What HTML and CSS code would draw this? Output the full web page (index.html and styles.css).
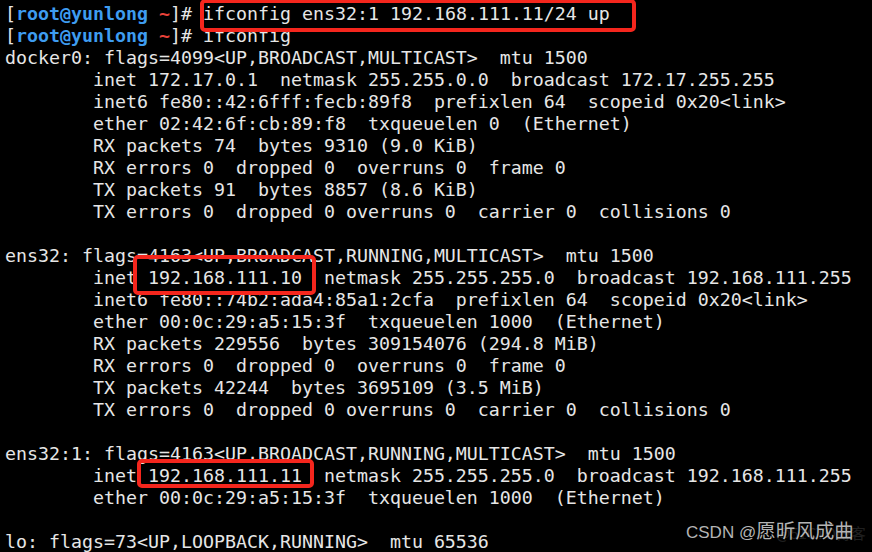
FILE: index.html
```html
<!DOCTYPE html>
<html lang="zh-CN">
<head>
    <meta charset="UTF-8">
    <title>ifconfig</title>
    <link rel="stylesheet" href="styles.css">
</head>
<body>
    <main class="terminal">
<pre class="output"><span class="br">[</span><span class="user">root@yunlong</span> <span class="tilde">~</span><span class="br">]#</span> ifconfig ens32:1 192.168.111.11/24 up
<span class="br">[</span><span class="user">root@yunlong</span> <span class="tilde">~</span><span class="br">]#</span> ifconfig
docker0: flags=4099&lt;UP,BROADCAST,MULTICAST&gt;  mtu 1500
        inet 172.17.0.1  netmask 255.255.0.0  broadcast 172.17.255.255
        inet6 fe80::42:6fff:fecb:89f8  prefixlen 64  scopeid 0x20&lt;link&gt;
        ether 02:42:6f:cb:89:f8  txqueuelen 0  (Ethernet)
        RX packets 74  bytes 9310 (9.0 KiB)
        RX errors 0  dropped 0  overruns 0  frame 0
        TX packets 91  bytes 8857 (8.6 KiB)
        TX errors 0  dropped 0 overruns 0  carrier 0  collisions 0

ens32: flags=4163&lt;UP,BROADCAST,RUNNING,MULTICAST&gt;  mtu 1500
        inet 192.168.111.10  netmask 255.255.255.0  broadcast 192.168.111.255
        inet6 fe80::74b2:ada4:85a1:2cfa  prefixlen 64  scopeid 0x20&lt;link&gt;
        ether 00:0c:29:a5:15:3f  txqueuelen 1000  (Ethernet)
        RX packets 229556  bytes 309154076 (294.8 MiB)
        RX errors 0  dropped 0  overruns 0  frame 0
        TX packets 42244  bytes 3695109 (3.5 MiB)
        TX errors 0  dropped 0 overruns 0  carrier 0  collisions 0

ens32:1: flags=4163&lt;UP,BROADCAST,RUNNING,MULTICAST&gt;  mtu 1500
        inet 192.168.111.11  netmask 255.255.255.0  broadcast 192.168.111.255
        ether 00:0c:29:a5:15:3f  txqueuelen 1000  (Ethernet)

lo: flags=73&lt;UP,LOOPBACK,RUNNING&gt;  mtu 65536</pre>

        <!-- 标注框 -->
        <div class="mark mark-cmd"></div>
        <div class="mark mark-ip10"></div>
        <div class="mark mark-ip11"></div>

        <div class="watermark-faint">@51CTO博客</div>
        <div class="watermark">CSDN @<span class="cjk">愿昕风成曲</span></div>
    </main>
</body>
</html>
```
FILE: styles.css
```css
* {
    margin: 0;
    padding: 0;
    box-sizing: border-box;
}

html, body {
    width: 872px;
    height: 552px;
    background-color: #000;
    overflow: hidden;
}

.terminal {
    position: relative;
    width: 872px;
    height: 552px;
}

.output {
    padding: 3px 0 0 5px;
    font-family: "DejaVu Sans Mono", "Liberation Mono", monospace;
    font-size: 18.27px;
    line-height: 22px;
    color: #e6e6e6;
    white-space: pre;
}

.br {
    color: #e6e6e6;
}

.user {
    color: #3e9cf0;
    font-weight: bold;
}

.tilde {
    color: #e8423a;
    font-weight: bold;
}

/* 红色标注框 */
.mark {
    position: absolute;
    border: 4px solid #f5261d;
    border-radius: 5px;
}

.mark-cmd {
    left: 200px;
    top: -1px;
    width: 436px;
    height: 33px;
}

.mark-ip10 {
    left: 133px;
    top: 255px;
    width: 183px;
    height: 40px;
}

.mark-ip11 {
    left: 137px;
    top: 459px;
    width: 177px;
    height: 29px;
}

.watermark {
    position: absolute;
    left: 686px;
    top: 518px;
    font-family: "Liberation Sans", "Noto Sans CJK SC", sans-serif;
    font-size: 17px;
    line-height: 24px;
    color: #b4b4b4;
    white-space: nowrap;
}

.watermark .cjk {
    font-family: "Noto Sans CJK SC", sans-serif;
    font-size: 19.5px;
}

.watermark-faint {
    position: absolute;
    left: 776px;
    top: 522px;
    font-family: "Noto Sans CJK SC", sans-serif;
    font-size: 15px;
    line-height: 22px;
    color: #ffffff;
    opacity: 0.12;
    white-space: nowrap;
}
```
